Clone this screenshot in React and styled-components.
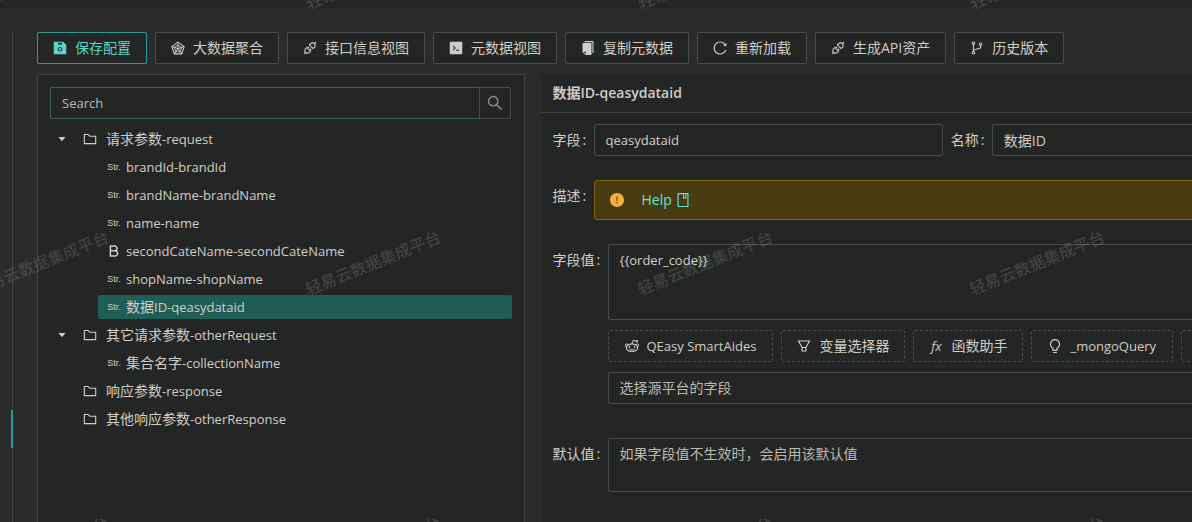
import React from 'react';
import styled, { createGlobalStyle, css } from 'styled-components';
import {
  AiFillCaretDown,
  AiFillCode,
  AiFillCopy,
  AiFillExclamationCircle,
  AiFillSave,
  AiOutlineApi,
  AiOutlineBold,
  AiOutlineBook,
  AiOutlineBranches,
  AiOutlineBulb,
  AiOutlineFilter,
  AiOutlineFolder,
  AiOutlineRadarChart,
  AiOutlineReddit,
  AiOutlineReload,
  AiOutlineSearch,
} from 'react-icons/ai';

const color = {
  page: '#2a2c2b',
  panel: '#242625',
  line: '#404342',
  border: '#4a4c4b',
  text: '#d1cdc6',
  muted: '#bdb8af',
  teal: '#5bd5c6',
  tealBorder: '#2f9a8f',
  selected: '#205e55',
};

const GlobalStyle = createGlobalStyle`
  *, *::before, *::after { box-sizing: border-box; }
  body {
    margin: 0;
    overflow: hidden;
    background: ${color.page};
    color: ${color.text};
    font: 14px/22px "Open Sans", "Noto Sans CJK SC", sans-serif;
  }
  button, input, textarea, select { font: inherit; color: inherit; margin: 0; }
`;

const Page = styled.div`
  display: flex;
  flex-direction: column;
  position: relative;
  min-width: 1377px;
  min-height: 100vh;
  overflow: hidden;
`;

const TopStrip = styled.div`
  height: 8px;
  background: ${color.panel};
`;

const Body = styled.div`
  flex: 1;
  display: flex;
  padding-top: 24px;
`;

const Rail = styled.div`
  position: relative;
  flex: none;
  width: 13px;
  border-right: 1px solid ${color.line};
`;

const RailMarker = styled.span`
  position: absolute;
  top: 378px;
  right: -1px;
  width: 2px;
  height: 38px;
  background: ${color.tealBorder};
`;

const Content = styled.main`
  flex: 1;
  min-width: 0;
  display: flex;
  flex-direction: column;
  gap: 10px;
  padding: 0 24px;
`;

const ButtonRow = styled.div`
  display: flex;
  gap: 8px;
`;

const Button = styled.button`
  display: flex;
  align-items: center;
  gap: 8px;
  flex: none;
  height: 32px;
  padding: 0 ${(p) => (p.$latin ? 16 : 15)}px;
  border: 1px ${(p) => (p.$dashed ? 'dashed' : 'solid')} ${color.border};
  border-radius: 2px;
  background: ${color.panel};
  white-space: nowrap;
  cursor: pointer;
  svg { flex: none; width: 14px; height: 14px; }
  ${(p) => p.$primary && css`
    border-color: ${color.tealBorder};
    color: ${color.teal};
  `}
`;

const FxIcon = styled.i`
  width: 14px;
  text-align: center;
  font-size: 13px;
  line-height: 14px;
`;

const LatinText = styled.span`
  font-size: 13px;
`;

const Panels = styled.div`
  flex: 1;
  display: grid;
  grid-template-columns: minmax(0, 3fr) minmax(0, 5fr);
  gap: 16px;
`;

const TreePanel = styled.section`
  padding: 12px;
  border: 1px solid ${color.line};
  border-bottom: 0;
  border-radius: 2px 2px 0 0;
  background: ${color.panel};
`;

const SearchBox = styled.form`
  display: flex;
  margin-bottom: 8px;
  padding-right: 1px;
`;

const SearchInput = styled.input`
  flex: 1;
  min-width: 0;
  height: 32px;
  padding: 0 11px;
  border: 1px solid #3f605c;
  border-right: 0;
  border-radius: 2px 0 0 2px;
  outline: 0;
  background: transparent;
  font-size: 13px;
  &::placeholder { color: ${color.muted}; opacity: 1; }
`;

const SearchButton = styled.button`
  display: grid;
  place-items: center;
  width: 32px;
  height: 32px;
  padding: 0;
  border: 1px solid ${color.border};
  border-radius: 0 2px 2px 0;
  background: transparent;
  color: #918c84;
  svg { width: 16px; height: 16px; }
`;

const Tree = styled.ul`
  margin: 0;
  padding: 0;
  list-style: none;
`;

const TreeRow = styled.li`
  display: flex;
  height: 24px;
  margin-bottom: 4px;
  padding-left: ${(p) => (p.$child ? 24 : 0)}px;
`;

const Switcher = styled.span`
  flex: none;
  display: grid;
  place-items: center;
  width: 24px;
  svg { width: 10px; height: 10px; }
`;

const TreeNode = styled.span`
  flex: 1;
  display: flex;
  align-items: center;
  gap: ${(p) => (p.$child ? 0 : 4)}px;
  padding: 0 4px;
  border-radius: 2px;
  background: ${(p) => (p.$selected ? color.selected : 'transparent')};
  white-space: nowrap;
`;

const NodeIcon = styled.span`
  flex: none;
  display: grid;
  place-items: center;
  width: 24px;
  svg { width: 14px; height: 14px; }
`;

const StrIcon = styled.span`
  font: 9px/12px "Liberation Sans", sans-serif;
`;

const DetailPanel = styled.section`
  border-radius: 2px 2px 0 0;
  background: ${color.panel};
`;

const DetailTitle = styled.h2`
  margin: 0;
  padding: 8px 12px;
  border-bottom: 1px solid ${color.line};
  font-size: 14px;
  line-height: 22px;
  font-weight: 600;
`;

const Form = styled.div`
  display: flex;
  flex-direction: column;
  gap: 24px;
  padding: 11px 12px;
`;

const Pair = styled.div`
  display: grid;
  grid-template-columns: 1fr 1fr;
  gap: 8px;
`;

const FieldRow = styled.div`
  display: flex;
  align-items: flex-start;
  margin-top: ${(p) => (p.$spaced ? 10 : 0)}px;
`;

const Label = styled.label`
  flex: none;
  line-height: 32px;
  &::after {
    content: ':';
    display: inline-block;
    width: 13px;
    padding-left: 2px;
  }
`;

const Control = styled.div`
  flex: 1;
  min-width: 0;
  display: flex;
  flex-direction: column;
  gap: 10px;
`;

const boxed = css`
  display: block;
  width: 100%;
  border: 1px solid ${color.border};
  border-radius: 2px;
  outline: 0;
  background: transparent;
  font-size: ${(p) => (p.$latin ? 13 : 14)}px;
`;

const TextInput = styled.input`
  ${boxed}
  height: 32px;
  padding: 0 11px;
`;

const TextArea = styled.textarea`
  ${boxed}
  height: ${(p) => p.$height}px;
  padding: 4px 11px;
  resize: none;
  &::placeholder { color: ${color.muted}; opacity: 1; }
`;

const Select = styled.select`
  ${boxed}
  height: 32px;
  padding: 0 11px;
  appearance: none;
  color: ${color.muted};
`;

const Alert = styled.div`
  display: flex;
  align-items: center;
  gap: 18px;
  height: 40px;
  padding: 0 15px;
  border: 1px solid #7d6111;
  border-radius: 2px;
  background: #483b12;
  > svg { width: 14px; height: 14px; color: #f0b13c; }
`;

const HelpLink = styled.a`
  display: flex;
  align-items: center;
  gap: 4px;
  color: #5ee6d4;
  text-decoration: none;
  svg { width: 14px; height: 14px; }
`;

const Watermark = styled.div`
  position: absolute;
  z-index: 2;
  top: -166px;
  left: -125px;
  right: 0;
  bottom: 0;
  display: grid;
  grid-template-columns: repeat(5, 332px);
  grid-auto-rows: 286px;
  place-items: center;
  pointer-events: none;
  overflow: hidden;
  color: rgba(255, 255, 255, 0.15);
  font-size: 16px;
  font-weight: 500;
`;

const WatermarkText = styled.span`
  transform: rotate(-22deg);
  white-space: nowrap;
`;

// The icon shapes keep a 64-unit margin; this view box trims it.
function Icon({ of: Shape }) {
  return <Shape viewBox="64 64 896 896" aria-hidden="true" />;
}

// Latin runs are set one size smaller than the Chinese characters beside them.
function Mixed({ children }) {
  return (
    <span>
      {children.split(/([\x20-\x7e]+)/).filter(Boolean).map((run, i) => (
        /^[\x20-\x7e]/.test(run) ? <LatinText key={i}>{run}</LatinText> : run
      ))}
    </span>
  );
}

const actions = [
  { icon: AiFillSave, text: '保存配置', primary: true },
  { icon: AiOutlineRadarChart, text: '大数据聚合' },
  { icon: AiOutlineApi, text: '接口信息视图' },
  { icon: AiFillCode, text: '元数据视图' },
  { icon: AiFillCopy, text: '复制元数据' },
  { icon: AiOutlineReload, text: '重新加载' },
  { icon: AiOutlineApi, text: '生成API资产' },
  { icon: AiOutlineBranches, text: '历史版本' },
];

const nodes = [
  { text: '请求参数-request', open: true },
  { text: 'brandId-brandId', type: 'str' },
  { text: 'brandName-brandName', type: 'str' },
  { text: 'name-name', type: 'str' },
  { text: 'secondCateName-secondCateName', type: 'bool' },
  { text: 'shopName-shopName', type: 'str' },
  { text: '数据ID-qeasydataid', type: 'str', selected: true },
  { text: '其它请求参数-otherRequest', open: true },
  { text: '集合名字-collectionName', type: 'str' },
  { text: '响应参数-response' },
  { text: '其他响应参数-otherResponse' },
];

function TypeIcon({ type }) {
  if (type === 'str') return <StrIcon>Str.</StrIcon>;
  return <Icon of={type === 'bool' ? AiOutlineBold : AiOutlineFolder} />;
}

export default function App() {
  return (
    <Page>
      <GlobalStyle />
      <TopStrip />
      <Body>
        <Rail><RailMarker /></Rail>
        <Content>
          <ButtonRow>
            {actions.map(({ icon, text, primary }) => (
              <Button key={text} type="button" $primary={primary}>
                <Icon of={icon} /><span>{text}</span>
              </Button>
            ))}
          </ButtonRow>
          <Panels>
            <TreePanel>
              <SearchBox onSubmit={(e) => e.preventDefault()}>
                <SearchInput type="text" placeholder="Search" aria-label="Search" />
                <SearchButton type="submit" aria-label="Search"><Icon of={AiOutlineSearch} /></SearchButton>
              </SearchBox>
              <Tree>
                {nodes.map(({ text, type, open, selected }) => (
                  <TreeRow key={text} $child={!!type}>
                    <Switcher>{open && <AiFillCaretDown />}</Switcher>
                    <TreeNode $child={!!type} $selected={selected}>
                      <NodeIcon><TypeIcon type={type} /></NodeIcon>
                      <Mixed>{text}</Mixed>
                    </TreeNode>
                  </TreeRow>
                ))}
              </Tree>
            </TreePanel>
            <DetailPanel>
              <DetailTitle>数据ID-qeasydataid</DetailTitle>
              <Form>
                <Pair>
                  <FieldRow>
                    <Label htmlFor="field">字段</Label>
                    <Control><TextInput id="field" $latin defaultValue="qeasydataid" /></Control>
                  </FieldRow>
                  <FieldRow>
                    <Label htmlFor="name">名称</Label>
                    <Control><TextInput id="name" defaultValue="数据ID" /></Control>
                  </FieldRow>
                </Pair>
                <FieldRow>
                  <Label as="span">描述</Label>
                  <Control>
                    <Alert>
                      <Icon of={AiFillExclamationCircle} />
                      <HelpLink href="#help">Help <Icon of={AiOutlineBook} /></HelpLink>
                    </Alert>
                  </Control>
                </FieldRow>
                <FieldRow>
                  <Label htmlFor="value">字段值</Label>
                  <Control>
                    <TextArea id="value" $latin $height={76} defaultValue="{{order_code}}" />
                    <ButtonRow>
                      <Button type="button" $dashed $latin><Icon of={AiOutlineReddit} /><Mixed>QEasy SmartAides</Mixed></Button>
                      <Button type="button" $dashed><Icon of={AiOutlineFilter} />变量选择器</Button>
                      <Button type="button" $dashed><FxIcon>fx</FxIcon>函数助手</Button>
                      <Button type="button" $dashed $latin><Icon of={AiOutlineBulb} /><Mixed>_mongoQuery</Mixed></Button>
                      <Button type="button" $dashed aria-label="More"><Icon of={AiOutlineBulb} /></Button>
                    </ButtonRow>
                    <Select aria-label="选择源平台的字段" defaultValue="">
                      <option value="">选择源平台的字段</option>
                    </Select>
                  </Control>
                </FieldRow>
                <FieldRow $spaced>
                  <Label htmlFor="fallback">默认值</Label>
                  <Control>
                    <TextArea id="fallback" $height={54} placeholder="如果字段值不生效时，会启用该默认值" />
                  </Control>
                </FieldRow>
              </Form>
            </DetailPanel>
          </Panels>
        </Content>
      </Body>
      <Watermark aria-hidden="true">
        {Array.from({ length: 15 }, (_, i) => (
          <WatermarkText key={i}>轻易云数据集成平台</WatermarkText>
        ))}
      </Watermark>
    </Page>
  );
}
